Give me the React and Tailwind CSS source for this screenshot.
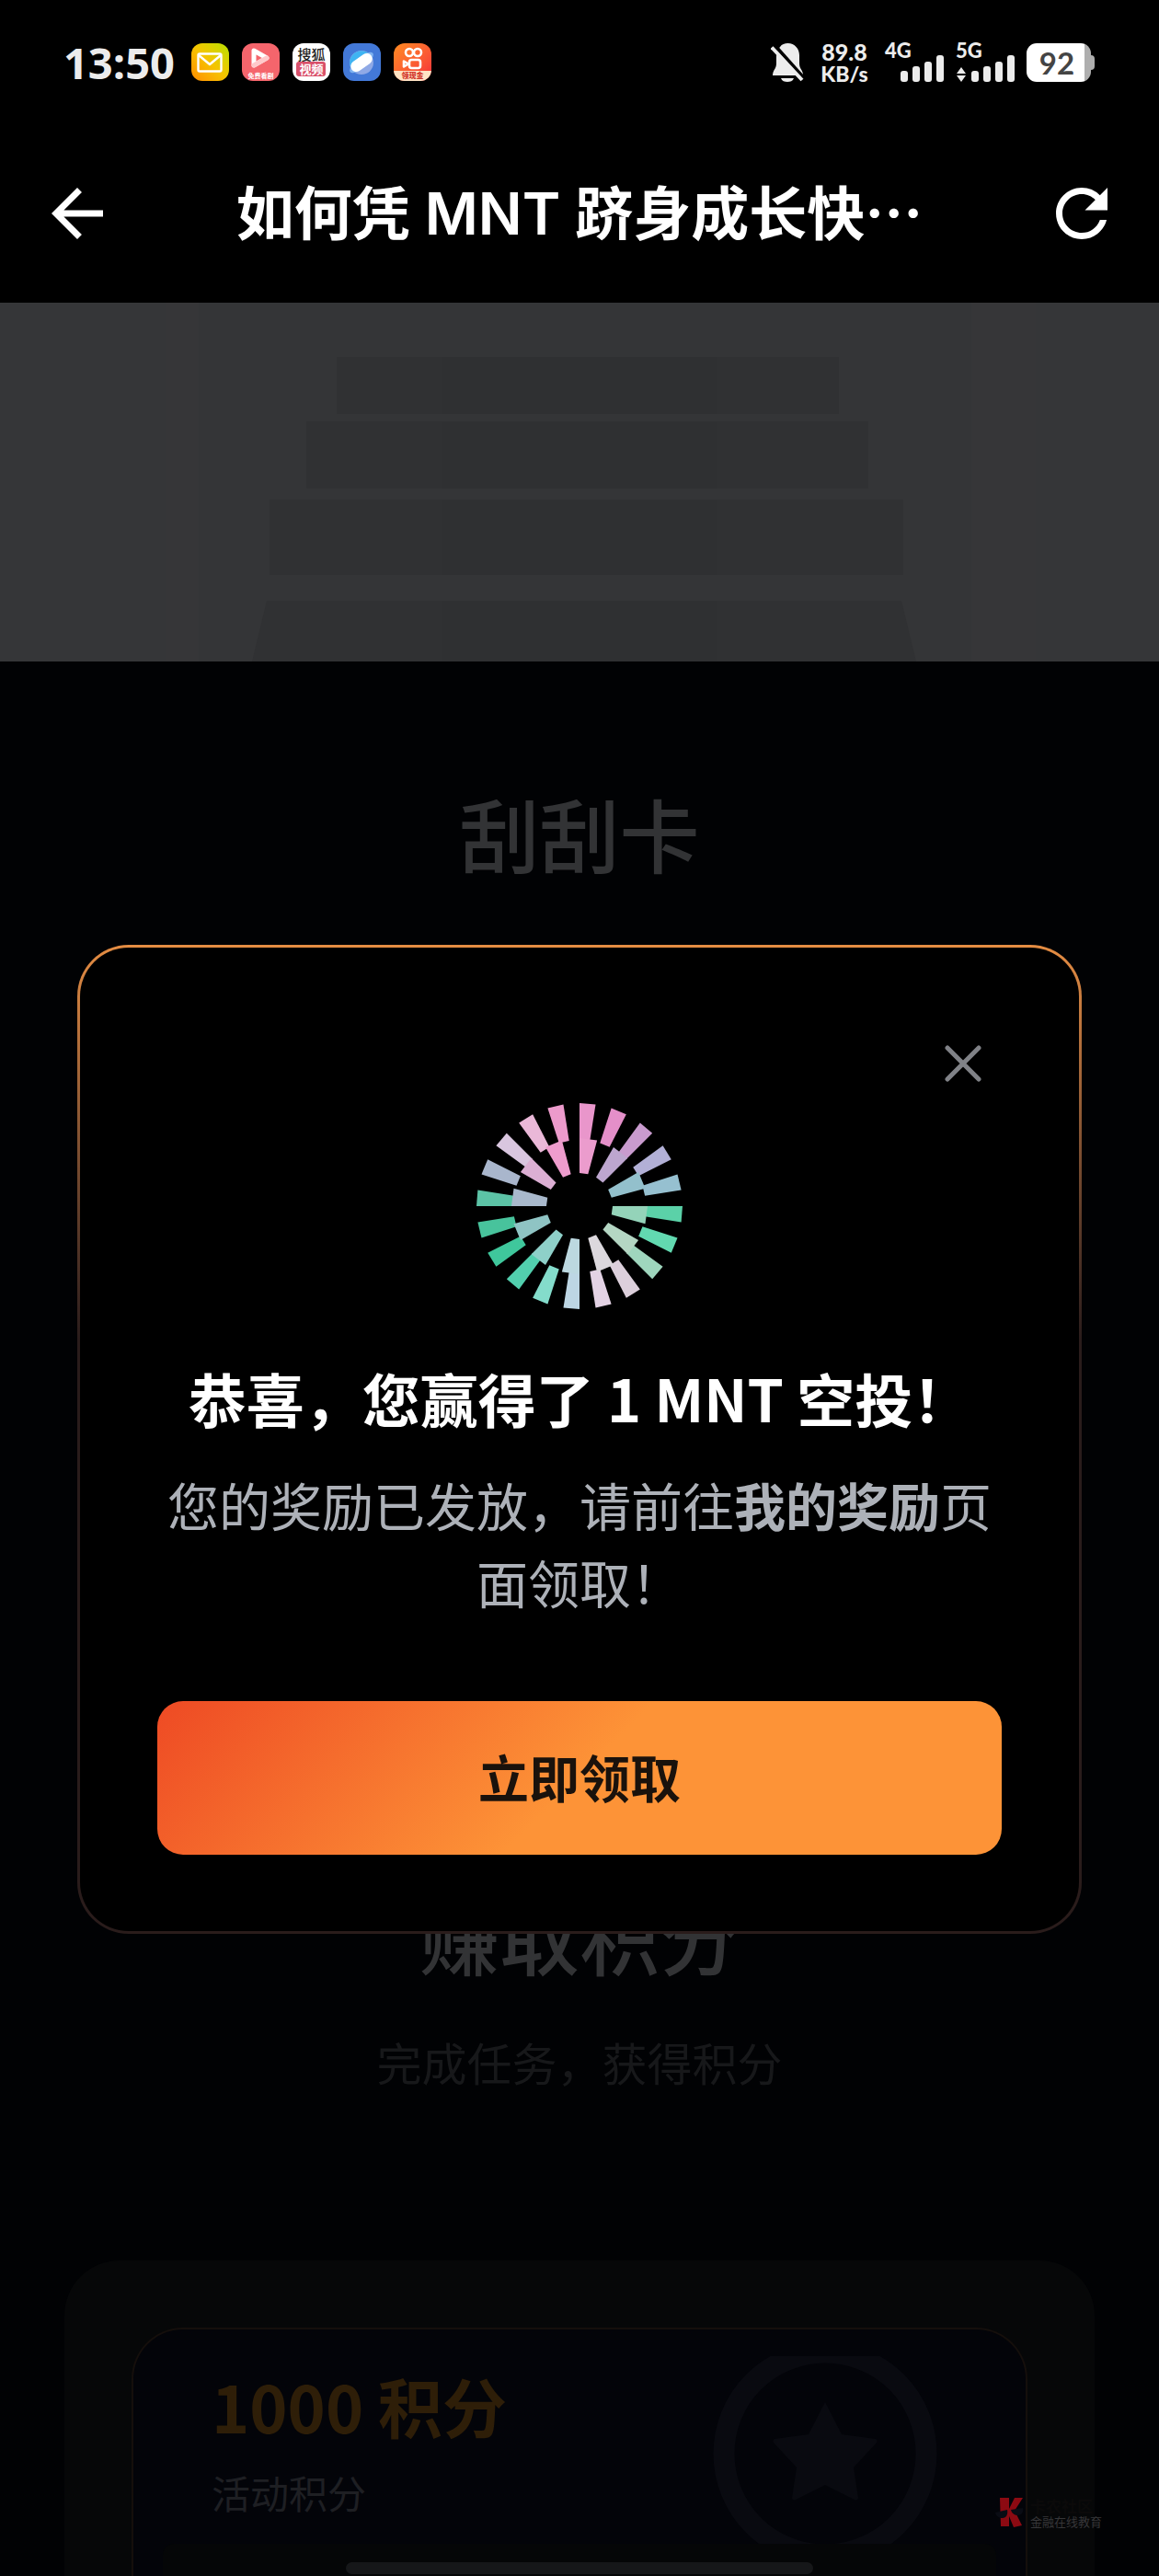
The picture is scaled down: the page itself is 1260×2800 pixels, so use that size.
import { MdArrowBack, MdRefresh } from 'react-icons/md';

const outerRays = [
  '#e996cb', '#e48fc9', '#c99bce', '#b2b0d6', '#96c0d0',
  '#5bd1a8', '#62d9b0', '#9fd6bd', '#dccfdb', '#e3d2e4',
  '#bdd6e4', '#84dccb', '#52cfae', '#3fc79c', '#48c39c',
  '#5cc3a6', '#a9b6cc', '#d9c6df', '#eab8d8', '#ec9acb',
];

const innerRays = [
  '#eb9ccd', '#bda6cf', '#93c0cc', '#94d3b9', '#b4d6c3', '#dcd8dd',
  '#bcd8e0', '#8ed0c9', '#8fc4c4', '#a9b9cc', '#dcafd3', '#ee9ccd',
];

// Four-cornered slice of a ring, angles in degrees clockwise from 12 o'clock
function slice(from, to, r1, r2) {
  const at = (deg, r) => {
    const a = (deg * Math.PI) / 180;
    return `${(112 + r * Math.sin(a)).toFixed(2)},${(112 - r * Math.cos(a)).toFixed(2)}`;
  };
  return [at(from, r1), at(from, r2), at(to, r2), at(to, r1)].join(' ');
}

function TokenLogo() {
  return (
    <svg viewBox="0 0 224 224" className="w-56 h-56" role="img" aria-label="MNT">
      {outerRays.map((color, i) => (
        <polygon key={i} points={slice(i * 18, i * 18 + 9, 72, 112)} fill={color} />
      ))}
      {innerRays.map((color, i) => (
        <polygon key={i} points={slice(i * 30, i * 30 + 15, 36, 74)} fill={color} />
      ))}
    </svg>
  );
}

function AppIcons() {
  return (
    <div className="flex items-center gap-[14px]">
      <div className="w-[41px] h-[41px] rounded-xl flex items-center justify-center bg-linear-to-tr from-[#ff8a00] via-[#f5c400] to-[#b5e000]">
        <svg viewBox="0 0 28 22" className="w-7 h-[22px]" fill="none" stroke="#fff" strokeWidth="2.4" strokeLinejoin="round">
          <rect x="1.5" y="1.5" width="25" height="19" rx="1.5" />
          <path d="M2 3l12 10L26 3" />
        </svg>
      </div>
      <div className="w-[41px] h-[41px] rounded-xl overflow-hidden flex flex-col items-center bg-[#f5656c]">
        <svg viewBox="0 0 20 22" className="w-5 h-[22px] mt-[5px]" fill="none" strokeLinejoin="round">
          <path d="M3 3v16L17 11z" stroke="#fff" strokeWidth="5" />
          <path d="M3 19L17 11" stroke="#ffc9cb" strokeWidth="5" strokeLinecap="round" />
        </svg>
        <span className="text-[7px] leading-[10px] font-bold text-white mt-[3px]">免费看剧</span>
      </div>
      <div className="w-[41px] h-[41px] rounded-xl bg-white flex flex-col items-center pt-1">
        <span className="text-[15px] leading-[16px] font-medium text-[#222]">搜狐</span>
        <span className="w-8 rounded-[3px] text-center text-[13px] leading-[16px] font-bold text-white bg-[#d9506a]">视频</span>
      </div>
      <div className="w-[41px] h-[41px] rounded-xl bg-[#4379d8] flex items-center justify-center">
        <svg viewBox="0 0 32 32" className="w-8 h-8">
          <circle cx="16" cy="16" r="13" fill="#8fa9e6" />
          <path d="M3 16a13 13 0 0 1 23-8L6 24a13 13 0 0 1-3-8z" fill="#3fb4f2" />
          <ellipse cx="16" cy="16" rx="16" ry="6" transform="rotate(-40 16 16)" fill="#7fb2f0" />
          <rect x="3" y="10" width="26" height="12" rx="6" transform="rotate(-35 16 16)" fill="#fff" />
        </svg>
      </div>
      <div className="w-[41px] h-[41px] rounded-xl overflow-hidden flex flex-col items-center bg-linear-to-br from-[#ff8a1f] to-[#f5243a]">
        <svg viewBox="0 0 24 26" className="w-6 h-[26px] mt-1 shrink-0" fill="none" stroke="#fff" strokeWidth="2.6" strokeLinejoin="round">
          <circle cx="9" cy="6" r="4" />
          <circle cx="18" cy="6" r="4" />
          <rect x="9" y="14" width="12" height="9" rx="2.5" />
          <path d="M3 15.5v6l5-3z" />
        </svg>
        <span className="w-full flex-1 bg-[#ffe3c4] text-center text-[8px] leading-[10px] font-black text-[#d3382c]">领现金</span>
      </div>
    </div>
  );
}

function Signal({ label, data }) {
  return (
    <div className="w-[65px] h-[42px] flex flex-col justify-between">
      <span className="text-[22px] leading-[16px] font-black font-['Lato','Noto_Sans',sans-serif]">{label}</span>
      <svg viewBox="0 0 65 30" className="w-[65px] h-[30px] -mt-4" fill="#ececec">
        <rect x="17" y="18" width="8" height="12" rx="3" />
        <rect x="30" y="13" width="8" height="17" rx="3" />
        <rect x="43" y="8" width="8" height="22" rx="3" />
        <rect x="56" y="1" width="8" height="29" rx="3" />
        {data && <path d="M1 21l5-7 5 7zM1 23l5 7 5-7z" />}
      </svg>
    </div>
  );
}

function StatusBar() {
  return (
    <div className="h-[135px] pl-[69px] pr-[70px] flex items-center justify-between text-[#ececec]">
      <div className="flex items-center gap-[18px]">
        <span className="text-[47px] leading-[56px] font-bold font-['Open_Sans','Noto_Sans',sans-serif]">13:50</span>
        <AppIcons />
      </div>
      <div className="flex items-center">
        <svg viewBox="0 0 36 42" className="w-9 h-[42px]" fill="#ececec">
          <path d="M10 4C12 1 15 0 18.500 0 26 0 31 6 31 13v9c0 6 4 7 4 13H2c0-6 4-7 4-13v-7c0-5 1-8 4-11z" />
          <path d="M11 38h14c-1 3-4 4-7 4s-6-1-7-4z" />
          <path d="M3 1l33 37" stroke="#000" strokeWidth="4" />
          <path d="M1 4.500L34 40" stroke="#ececec" strokeWidth="4" />
        </svg>
        <div className="ml-[17px] w-[54px] text-center font-black font-['Lato','Noto_Sans',sans-serif]">
          <div className="text-[25px] leading-[24px]">89.8</div>
          <div className="text-[23px] leading-[24px]">KB/s</div>
        </div>
        <div className="ml-[17px] flex gap-3">
          <Signal label="4G" />
          <Signal label="5G" data />
        </div>
        <div className="ml-3 flex items-center">
          <div className="w-[70px] h-[42px] rounded-[11px] flex items-center justify-center pr-1 bg-linear-to-r from-white from-90% to-[#aeaeae] to-90%">
            <span className="text-[33px] leading-[42px] font-bold text-[#444] font-['Lato','Noto_Sans',sans-serif]">92</span>
          </div>
          <div className="w-1 h-4 rounded-r-sm bg-[#aeaeae]" />
        </div>
      </div>
    </div>
  );
}

function Header() {
  return (
    <header className="h-[194px] px-[42px] flex items-center justify-between text-white">
      <button type="button" aria-label="返回">
        <MdArrowBack size={84} />
      </button>
      <h1 className="pb-1 text-[63px] leading-[88px] font-bold whitespace-nowrap">
        如何凭<span className="font-semibold font-['Inter',sans-serif]"> MNT </span>跻身成长快⋯
      </h1>
      <button type="button" aria-label="刷新">
        <MdRefresh size={84} />
      </button>
    </header>
  );
}

function HeroBanner() {
  return (
    <div className="h-[390px] bg-[#353638]">
      <svg viewBox="0 0 1260 390" preserveAspectRatio="none" className="w-full h-full">
        <rect x="180" width="36" height="390" fill="#363638" />
        <rect x="216" width="840" height="390" fill="#343537" />
        <rect x="1056" width="70" height="390" fill="#363638" />
        <g fill="#303133">
          <rect x="366" y="59" width="546" height="62" />
          <rect x="333" y="129" width="611" height="73" />
          <rect x="293" y="214" width="689" height="82" />
          <path d="M290 324h690l16 66H274z" />
        </g>
        <g fill="#2f3032">
          <rect x="480" y="59" width="300" height="62" />
          <rect x="480" y="129" width="300" height="73" />
          <rect x="480" y="214" width="300" height="82" />
          <rect x="480" y="324" width="300" height="66" />
        </g>
      </svg>
    </div>
  );
}

function PointsCard() {
  return (
    <section className="mt-[180px] mx-[70px] flex-1 flex flex-col rounded-t-[60px] bg-[#060708] px-[73px] pt-[73px] text-left">
      <div className="flex-1 flex flex-col rounded-t-[56px] border-2 border-b-0 border-[#150f0c] bg-[#030409] pt-[29px]">
        <div className="h-[204px] pl-[85px] pr-[94px] flex justify-between">
          <div>
            <div className="text-[70px] leading-[108px] font-bold text-[#2e1e08]">1000 积分</div>
            <div className="mt-[10px] text-[42px] leading-[60px] text-[#1e1f23]">活动积分</div>
          </div>
          <svg viewBox="0 0 248 204" className="w-[248px] h-[204px]">
            <circle cx="124" cy="106" r="110" fill="none" stroke="#090a10" strokeWidth="23" />
            <path
              d="M124 50l18 35 37 5c2 1 2 3 1 4l-25 27 5 33c0 2-2 3-4 2l-32-16-32 16c-2 1-4 0-4-2l5-33-25-27c-1-1-1-3 1-4l37-5z"
              fill="#090a10"
            />
          </svg>
        </div>
        <div className="flex-1 mx-8 rounded-t-xl bg-[#050607]" />
      </div>
    </section>
  );
}

function RewardDialog() {
  return (
    <div className="absolute inset-0 flex items-center justify-center px-[84px]">
      <div
        role="dialog"
        aria-labelledby="reward-title"
        className="w-full rounded-[56px] p-[3px] bg-linear-to-b from-[#e58d43] to-[#2a1c1b] to-40%"
      >
        <div className="rounded-[53px] bg-black px-[84px] py-[83px] flex flex-col items-center text-center">
          <button type="button" aria-label="关闭" className="self-end w-[84px] h-[86px] flex items-center justify-center">
            <svg viewBox="0 0 40 40" className="w-10 h-10" stroke="#808287" strokeWidth="5" strokeLinecap="round">
              <path d="M3 3l34 34M37 3L3 37" />
            </svg>
          </button>
          <TokenLogo />
          <h2 id="reward-title" className="mt-[52px] text-[63px] leading-[88px] font-bold text-white">
            恭喜，您赢得了 1 MNT 空投！
          </h2>
          <p className="mt-[30px] text-[56px] leading-[84px] text-[#adb1b8]">
            您的奖励已发放，请前往<strong className="font-bold">我的奖励</strong>页面领取！
          </p>
          <button
            type="button"
            className="mt-[88px] w-full h-[167px] pb-1 rounded-[28px] text-[55px] font-bold text-[#1a120c] bg-linear-[135deg] from-[#ee4a24] to-[#fd9337] to-50%"
          >
            立即领取
          </button>
        </div>
      </div>
    </div>
  );
}

function Watermark() {
  return (
    <div className="absolute right-[62px] bottom-[52px] flex items-end gap-[6px]">
      <svg viewBox="0 0 32 34" className="w-8 h-[34px]">
        <path d="M5 1h10v12L21 1h9l-9 14 8 16-9 2-5-12v11H6z" fill="#8c0a12" />
        <path d="M0 17l13-3c1 5-1 9-5 9s-7-2-8-6zM17 14l13-2c1 4-1 8-5 8s-7-2-8-6z" fill="#0a0c14" />
      </svg>
      <div>
        <div className="text-[17px] leading-[20px] font-bold text-[#0b0a0a]">卡农社区</div>
        <div className="text-[13px] leading-[14px] text-[#363638]">金融在线教育</div>
      </div>
    </div>
  );
}

export default function App() {
  return (
    <div
      lang="zh-CN"
      className="relative min-h-screen flex flex-col overflow-hidden bg-black font-['Noto_Sans_CJK_SC',sans-serif]"
    >
      <StatusBar />
      <Header />
      <main className="relative flex-1 flex flex-col bg-[#010204] text-center">
        <HeroBanner />
        <h2 className="mt-[122px] text-[87px] leading-[128px] font-medium text-[#323335]">刮刮卡</h2>
        {/* Scratch card area, covered by the dialog */}
        <div className="h-[1070px]" />
        <h2 className="text-[87px] leading-[128px] font-medium text-[#323335]">赚取积分</h2>
        <p className="mt-[38px] text-[49px] leading-[72px] text-[#17181a]">完成任务，获得积分</p>
        <PointsCard />
        <RewardDialog />
      </main>
      <Watermark />
      {/* Home indicator */}
      <div className="absolute bottom-[2px] left-1/2 -translate-x-1/2 w-[508px] h-[13px] rounded-full bg-[#161719]" />
    </div>
  );
}
